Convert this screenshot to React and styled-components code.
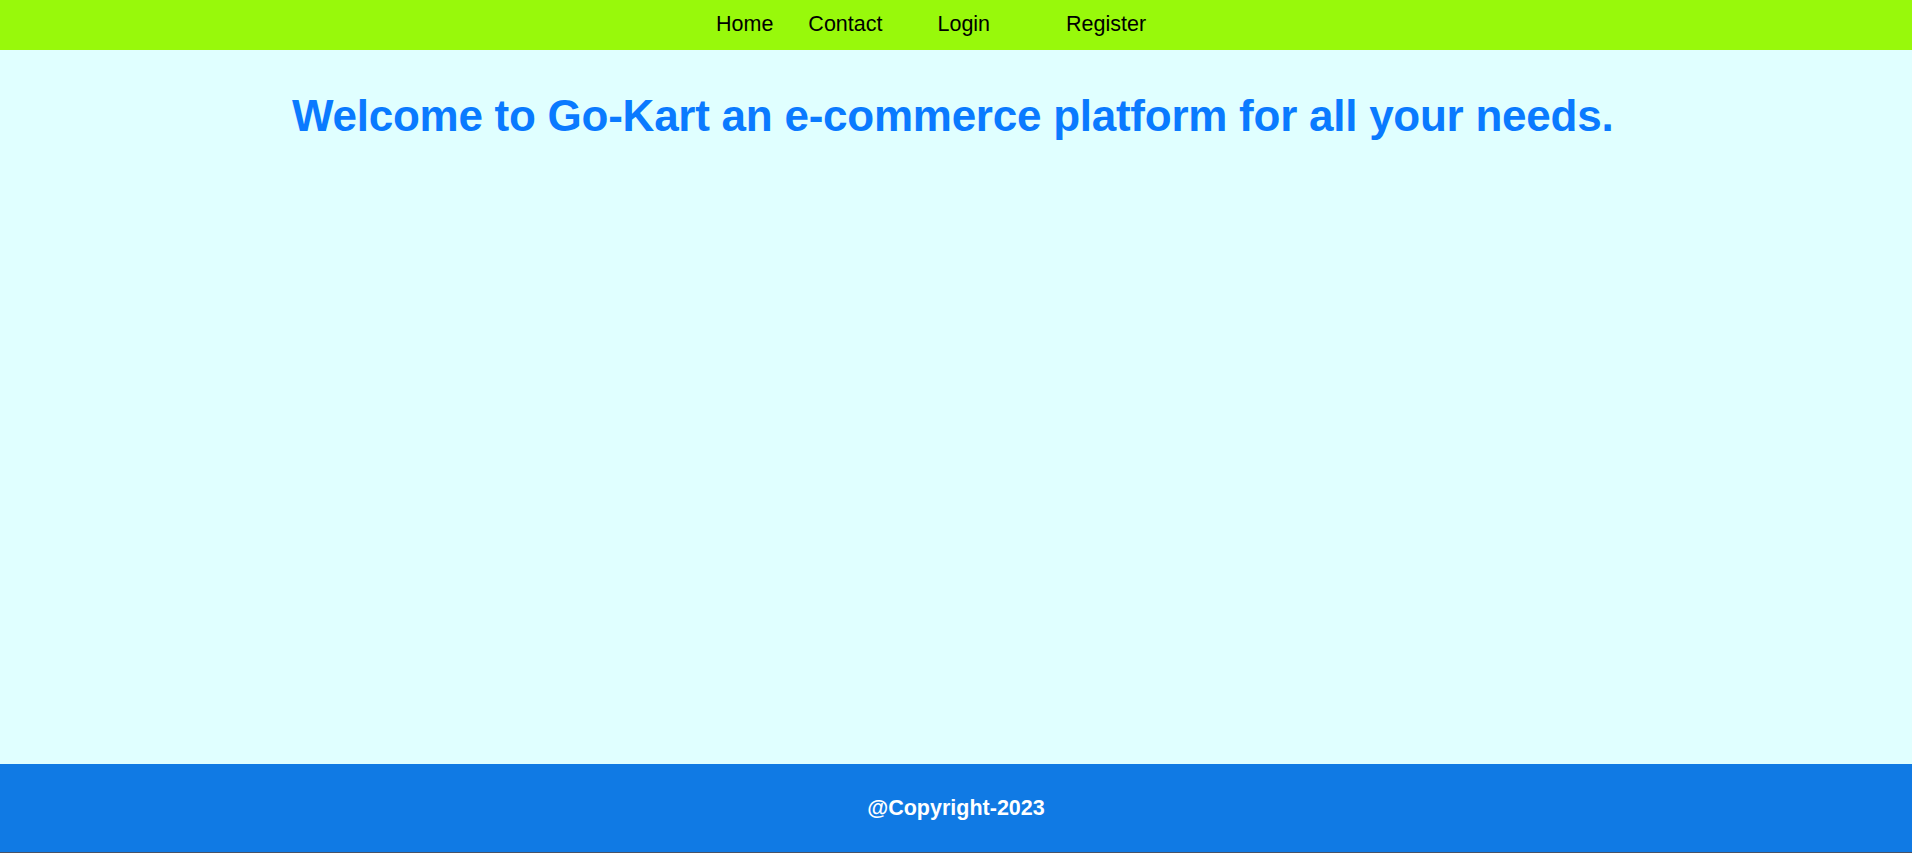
import React from "react";
import styled, { createGlobalStyle } from "styled-components";

const GlobalStyle = createGlobalStyle`
  html, body {
    margin: 0;
    padding: 0;
  }
  body {
    font-family: "Liberation Sans", Arial, sans-serif;
    background-color: #e0ffff;
  }
`

const Page = styled.div`
  min-height: 100vh;
  display: flex;
  flex-direction: column;
  background-color: #e0ffff;
`

const NavBar = styled.nav`
  height: 50px;
  background-color: #98f90b;
  display: flex;
  align-items: center;
  padding-left: 716px;
`

const NavLink = styled.a`
  font-size: 21.5px;
  color: #000;
  text-decoration: none;
  margin-left: ${props => props.$gap || 0}px;
  line-height: 1;
`

const Main = styled.main`
  flex: 1;
`

const Title = styled.h1`
  margin: 41px 0 0 292px;
  font-size: 44px;
  letter-spacing: -0.25px;
  font-weight: bold;
  color: #0a7aff;
  white-space: nowrap;
`

const Footer = styled.footer`
  height: 88px;
  background-color: #107ae4;
  border-bottom: 1px solid #4a5264;
  display: flex;
  align-items: center;
  justify-content: center;
  color: #fff;
  font-size: 21.5px;
  font-weight: bold;
`

const links = [
  { label: "Home", gap: 0 },
  { label: "Contact", gap: 35 },
  { label: "Login", gap: 55 },
  { label: "Register", gap: 76 },
]

function App() {
  return (
    <Page>
      <GlobalStyle />
      <NavBar>
        {links.map(link => (
          <NavLink key={link.label} href="#" $gap={link.gap}>{link.label}</NavLink>
        ))}
      </NavBar>
      <Main>
        <Title>Welcome to Go-Kart an e-commerce platform for all your needs.</Title>
      </Main>
      <Footer>@Copyright-2023</Footer>
    </Page>
  )
}

export default App;
